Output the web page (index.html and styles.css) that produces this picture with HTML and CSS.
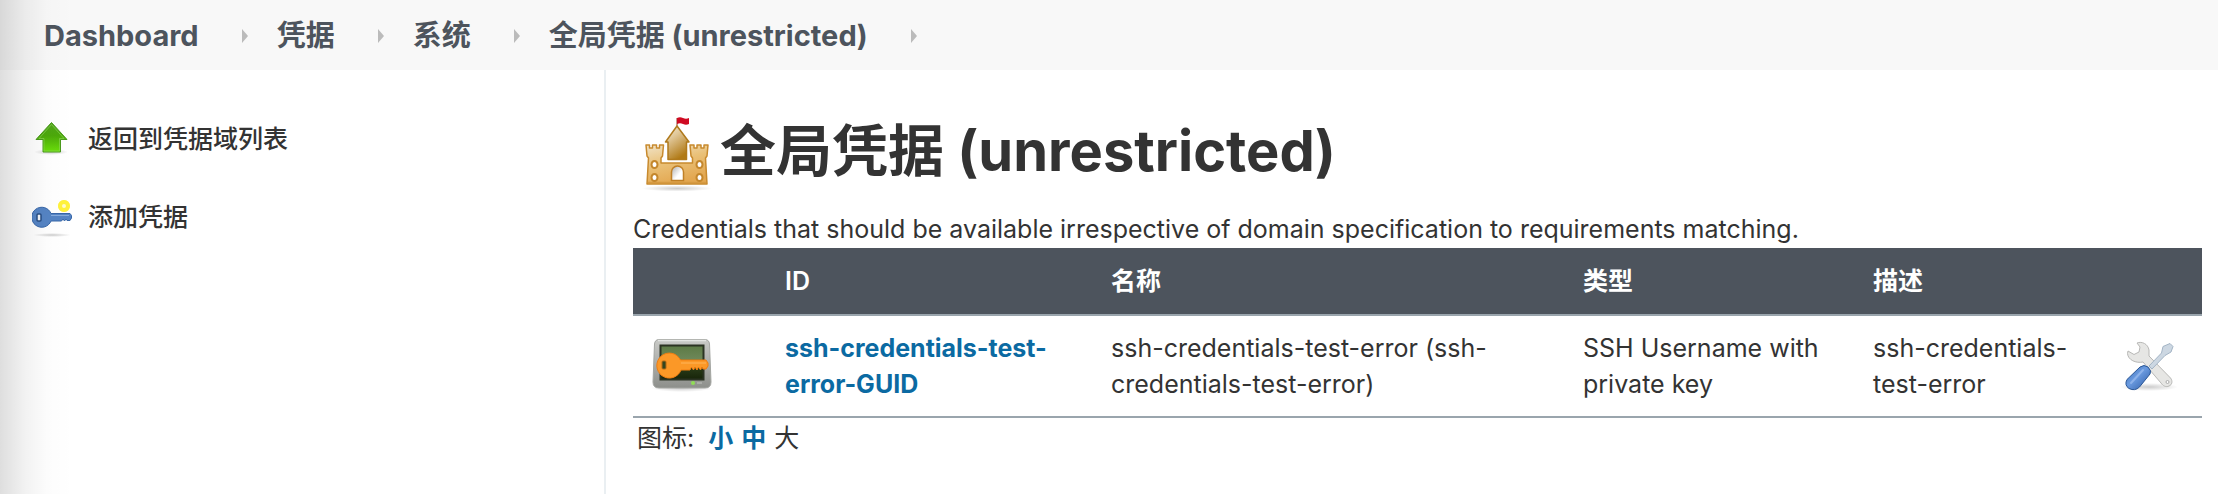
FILE: index.html
```html
<!DOCTYPE html>
<html lang="zh-CN">
<head>
    <meta charset="UTF-8">
    <title>全局凭据 (unrestricted)</title>
    <link rel="stylesheet" href="styles.css">
</head>
<body>
    <nav class="breadcrumbs">
        <a href="#">Dashboard</a>
        <span class="separator"></span>
        <a href="#">凭据</a>
        <span class="separator"></span>
        <a href="#">系统</a>
        <span class="separator"></span>
        <a href="#">全局凭据 (unrestricted)</a>
        <span class="separator"></span>
    </nav>

    <div class="page-body">
        <aside class="side-panel">
            <a href="#" class="task">
                <svg class="task-icon" viewBox="0 0 40 40">
                    <defs>
                        <linearGradient id="green" x1="0" y1="0" x2="0" y2="1">
                            <stop offset="0" stop-color="#4fa31b"/>
                            <stop offset="0.45" stop-color="#4ca90a"/>
                            <stop offset="1" stop-color="#6be00a"/>
                        </linearGradient>
                        <radialGradient id="shadow">
                            <stop offset="0" stop-color="#000" stop-opacity="0.2"/>
                            <stop offset="1" stop-color="#000" stop-opacity="0"/>
                        </radialGradient>
                    </defs>
                    <ellipse cx="19" cy="33" rx="17" ry="3" fill="url(#shadow)"/>
                    <path d="M19.500 3.500 L35 20.500 H28.500 V33 H11 V20.500 H4 Z" fill="url(#green)" stroke="#4a9a1c" stroke-linejoin="round"/>
                    <path d="M19.500 5.500 L32 19.500 H27.500 V32 H12 V19.500 H7 Z" fill="none" stroke="#8fd65c" stroke-opacity="0.6"/>
                </svg>
                返回到凭据域列表
            </a>
            <a href="#" class="task">
                <svg class="task-icon" viewBox="0 0 40 40">
                    <ellipse cx="20" cy="38" rx="19" ry="2" fill="url(#shadow)"/>
                    <circle cx="32" cy="9" r="6" fill="#fff67a"/>
                    <circle cx="32" cy="9" r="4" fill="#fffbd0" stroke="#fff23c" stroke-width="4"/>
                    <path d="M19 16.500 H38 L39.500 18.500 V21 L38 23.500 H35 L34 22 L32.500 24 L31 22 L29.500 24 H19 A10 10 0 1 1 19 16.500 Z" fill="#5584c4" stroke="#3766a8"/>
                    <path d="M19 18.500 H37" stroke="#86abdd" stroke-width="1"/>
                    <rect x="5" y="17" width="4" height="7" rx="1" fill="#f2f4f7" stroke="#294f85" stroke-width="1.500"/>
                </svg>
                添加凭据
            </a>
        </aside>

        <main class="main-panel">
            <h1>
                <svg class="castle" viewBox="0 0 72 76">
                    <defs>
                        <linearGradient id="wall" x1="0" y1="0" x2="0.4" y2="1">
                            <stop offset="0" stop-color="#f0e3c8"/>
                            <stop offset="0.5" stop-color="#eac178"/>
                            <stop offset="1" stop-color="#e3a750"/>
                        </linearGradient>
                        <linearGradient id="keep" x1="0" y1="0" x2="0.5" y2="1">
                            <stop offset="0" stop-color="#f8efdc"/>
                            <stop offset="0.4" stop-color="#dfc595"/>
                            <stop offset="1" stop-color="#b17a16"/>
                        </linearGradient>
                        <linearGradient id="door" x1="0" y1="0" x2="1" y2="1">
                            <stop offset="0" stop-color="#aaa"/>
                            <stop offset="0.6" stop-color="#fff"/>
                        </linearGradient>
                    </defs>
                    <ellipse cx="36" cy="72.500" rx="35" ry="3" fill="url(#shadow)"/>
                    <path d="M36 2 V11" stroke="#8a3a20"/>
                    <path d="M36 2 Q39 0.500 42 2 T48 2 V8 Q45 9.500 42 8 T36 8 Z" fill="#cf0a22"/>
                    <path d="M36 10 L48 26 H45.500 V43.500 H27 V26 H24.500 Z" fill="url(#keep)" stroke="#b07a1c" stroke-width="1.500" stroke-linejoin="round"/>
                    <path d="M5 29 H8.500 V32 H11.500 V29 H15.500 V32 H18.500 V29 H22.500 L21.500 40 L20 42 V47 H51.500 V42 L50 40 L49 29 H53 V32 H56 V29 H60 V32 H63 V29 H67 L66 40 L64.500 42 L66 68 H6 L7.500 42 L6 40 Z" fill="url(#wall)" stroke="#c88a2e" stroke-width="1.500" stroke-linejoin="round"/>
                    <path d="M7 66.500 H65" stroke="#d69a42" stroke-width="1.500"/>
                    <path d="M30.500 64.500 V56 A6 6 0 0 1 42.500 56 V64.500 Z" fill="url(#door)" stroke="#c08026" stroke-width="1.500"/>
                    <g fill="#fff" stroke="#c4872d" stroke-width="2">
                        <ellipse cx="13.500" cy="48.500" rx="3" ry="3.500"/>
                        <ellipse cx="58.500" cy="48.500" rx="3" ry="3.500"/>
                        <ellipse cx="13.500" cy="61.500" rx="3" ry="3.500"/>
                        <ellipse cx="58.500" cy="61.500" rx="3" ry="3.500"/>
                    </g>
                </svg>
                <span class="heading-text">全局凭据 (unrestricted)</span>
            </h1>
            <p class="description">Credentials that should be available irrespective of domain specification to requirements matching.</p>

            <table class="credentials">
                <colgroup>
                    <col class="col-icon">
                    <col class="col-id">
                    <col>
                    <col class="col-kind">
                    <col class="col-description">
                    <col class="col-tools">
                </colgroup>
                <thead>
                    <tr>
                        <th></th>
                        <th>ID</th>
                        <th>名称</th>
                        <th>类型</th>
                        <th>描述</th>
                        <th></th>
                    </tr>
                </thead>
                <tbody>
                    <tr>
                        <td class="icon-cell">
                            <svg class="row-icon" viewBox="0 0 72 72">
                                <defs>
                                    <linearGradient id="frame" x1="0" y1="0" x2="0" y2="1">
                                        <stop offset="0" stop-color="#c9cac7"/>
                                        <stop offset="1" stop-color="#8d8f8b"/>
                                    </linearGradient>
                                    <linearGradient id="screen" x1="0" y1="0" x2="0" y2="1">
                                        <stop offset="0" stop-color="#5c7a45"/>
                                        <stop offset="0.4" stop-color="#6d8758"/>
                                        <stop offset="0.5" stop-color="#30451f"/>
                                        <stop offset="1" stop-color="#172409"/>
                                    </linearGradient>
                                </defs>
                                <ellipse cx="35" cy="58" rx="31" ry="4" fill="url(#shadow)"/>
                                <path d="M12 9.500 H58 Q62 9.500 62.500 14 L64 52 Q64 58 58 58 H12 Q6 58 6 52 L7.500 14 Q8 9.500 12 9.500 Z" fill="url(#frame)" stroke="#a4a6a2"/>
                                <path d="M11 10.500 H59" stroke="#e4e5e3" stroke-width="1.500"/>
                                <rect x="13.500" y="15.500" width="43" height="34" fill="url(#screen)" stroke="#2b3323" stroke-width="2"/>
                                <circle cx="46" cy="53" r="2" fill="#8fdd55"/>
                                <rect x="50" y="52" width="5" height="2" fill="#a9aba7"/>
                                <path d="M33.500 30 H59 L61 33 V36 L59 39 H56 L55 37 L53.500 40 L51.500 37 L50 40 L48 37 L46.500 40 L44.500 37 L43 40 H34 A12.500 12.500 0 1 1 33.500 30 Z" fill="#fb9827" stroke="#f07d10"/>
                                <path d="M34 33 H59" stroke="#ffb55a"/>
                                <rect x="15" y="31" width="4" height="8" rx="1" fill="#33451f" stroke="#b46a14"/>
                            </svg>
                        </td>
                        <td><a href="#">ssh-credentials-test-error-GUID</a></td>
                        <td>ssh-credentials-test-error (ssh-credentials-test-error)</td>
                        <td>SSH Username with private key</td>
                        <td>ssh-credentials-test-error</td>
                        <td class="tools-cell">
                            <a href="#" aria-label="更新">
                                <svg class="row-icon" viewBox="0 0 72 72">
                                    <defs>
                                        <linearGradient id="handle" x1="0" y1="0" x2="1" y2="1">
                                            <stop offset="0" stop-color="#356bb4"/>
                                            <stop offset="0.45" stop-color="#6b9be0"/>
                                            <stop offset="1" stop-color="#2a59a3"/>
                                        </linearGradient>
                                    </defs>
                                    <ellipse cx="36" cy="57" rx="29" ry="4" fill="url(#shadow)"/>
                                    <path d="M24 13 C29 11 35 14 36 20 L36 26 L57.500 48 C60 51 59 55 56 56 C53 57.500 50 56 48 53 L30 32 C23 33.500 15 30 14.500 23.500 L15 21 L21 24.500 L26 22 L27 17 Z" fill="#e6e6e4" stroke="#b8b8b6" stroke-width="1" stroke-linejoin="round"/>
                                    <circle cx="54.500" cy="52" r="1.500" fill="#fff" stroke="#aaa"/>
                                    <path d="M57 13.500 L60 16.500 L58 22 L52 25.500 L39 39 L36 36 L48.500 23 L50 16.500 Z" fill="#ccd7e2" stroke="#a3b4c5" stroke-linejoin="round"/>
                                    <path d="M27 37 Q31 34 35 37 Q39 41 37 44 L26.500 57 Q22 61.500 16 58.500 Q11 55 14 49.500 Z" fill="url(#handle)" stroke="#2b5796"/>
                                    <path d="M30 40 L18 53" stroke="#8db2ea" stroke-width="2" stroke-linecap="round"/>
                                </svg>
                            </a>
                        </td>
                    </tr>
                </tbody>
            </table>

            <div class="icon-size">
                <span class="label">图标:</span>
                <a href="#">小</a>
                <a href="#">中</a>
                <span>大</span>
            </div>
        </main>
    </div>
</body>
</html>
```
FILE: styles.css
```css
* {
    box-sizing: border-box;
}

body {
    margin: 0;
    min-height: 100vh;
    display: flex;
    flex-direction: column;
    position: relative;
    font-family: Inter, "Noto Sans CJK SC", sans-serif;
    font-size: 25px;
    line-height: 36px;
    color: #333;
    background-color: #fff;
}

/* soft shade along the left edge of the window */
body::before {
    content: "";
    position: absolute;
    top: 0;
    bottom: 0;
    left: 0;
    width: 73px;
    background: linear-gradient(to right, rgba(0, 0, 0, 0.13), rgba(0, 0, 0, 0.05) 35%, rgba(0, 0, 0, 0.01) 65%, rgba(0, 0, 0, 0));
    pointer-events: none;
}

a {
    color: #0b6aa2;
    font-weight: 700;
    text-decoration: none;
}

.breadcrumbs {
    display: flex;
    align-items: center;
    height: 70px;
    padding: 2px 44px 0;
    background-color: #f8f8f8;
}

.breadcrumbs a {
    font-size: 29px;
    color: #4d545d;
}

.separator {
    margin: 0 29px 0 43px;
    border-left: 6px solid #bbb;
    border-top: 7px solid transparent;
    border-bottom: 7px solid transparent;
}

.page-body {
    flex: 1;
    display: flex;
}

.side-panel {
    flex: none;
    width: 606px;
    padding: 48px 32px;
    border-right: 2px solid #eaeff2;
}

.task {
    display: flex;
    align-items: center;
    gap: 16px;
    height: 42px;
    margin-bottom: 36px;
    font-weight: 500;
    color: #333;
}

.task-icon {
    width: 40px;
    height: 40px;
}

.main-panel {
    flex: 1;
    padding: 44px 16px 0 27px;
}

h1 {
    display: flex;
    align-items: center;
    gap: 7px;
    margin: 0;
    padding-left: 8px;
    font-size: 56px;
    line-height: 80px;
    font-weight: 700;
}

.heading-text {
    padding-bottom: 6px;
    line-height: 74px;
}

.castle {
    width: 72px;
    height: 76px;
}

.description {
    margin: 16px 0 0;
    line-height: 38px;
}

.credentials {
    width: 100%;
    table-layout: fixed;
    border-collapse: collapse;
}

.col-icon {
    width: 136px;
}

.col-id {
    width: 326px;
}

.col-kind {
    width: 290px;
}

.col-description {
    width: 247px;
}

.col-tools {
    width: 98px;
}

th {
    height: 67px;
    padding: 0 16px;
    color: #fff;
    font-weight: 600;
    text-align: left;
    background-color: #4d545d;
}

td {
    height: 102px;
    padding: 14px 16px;
}

tr {
    border-bottom: 2px solid #9aa5ad;
}

.icon-cell,
.tools-cell {
    padding: 0 0 0 14px;
}

.tools-cell {
    padding-left: 9px;
}

.row-icon {
    display: block;
    width: 72px;
    height: 72px;
}

.icon-size {
    display: flex;
    gap: 8px;
    padding: 2px 4px;
}

.icon-size .label {
    margin-right: 6px;
}
```
